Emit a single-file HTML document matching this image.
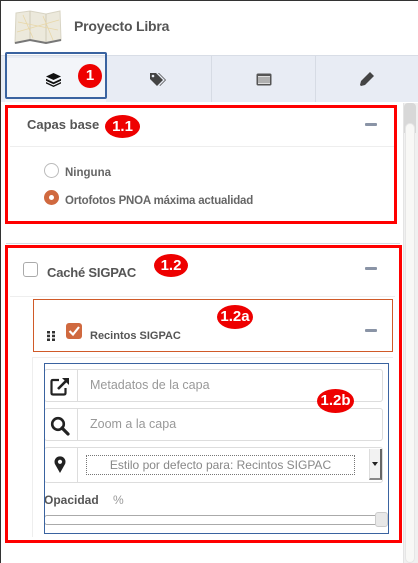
<!DOCTYPE html>
<html><head><meta charset="utf-8"><style>
*{box-sizing:border-box;margin:0;padding:0}
body{width:418px;height:563px;overflow:hidden;background:#fff;font-family:"Liberation Sans",sans-serif;position:relative;color:#555}
.a{position:absolute}
.badge{position:absolute;background:#e00;color:#fff;font-weight:bold;font-size:15px;border-radius:50%;text-align:center;line-height:24px;height:24px}
.minus{position:absolute;width:12px;height:3px;background:#8a94a6;border-radius:1px}
.row{position:absolute;left:44px;width:339px;border:1px solid #ddd;border-radius:3px;background:#fff}
.row .ic{position:absolute;left:0;top:0;bottom:0;width:33px;border-right:1px solid #ddd}
.row .t{position:absolute;left:45px;font-size:12.5px;color:#999}
</style></head><body>
<div class="a" style="left:0;top:0;width:1px;height:563px;background:#333"></div>
<div class="a" style="left:0;top:0;width:418px;height:1px;background:#333"></div>
<svg class="a" style="left:13px;top:10px" width="50" height="34" viewBox="0 0 50 34">
<path d="M3 3 L17 1 L33 4 L47 1 L48 30 L33 33 L17 30 L2 33 Z" fill="#ece9dc" stroke="#d8d4c4"/>
<path d="M17 1 L17 30 M33 4 L33 33" stroke="#cfcab8"/>
<path d="M5 12 L45 20 M10 5 L20 28 M30 6 L40 30 M4 22 L46 10" stroke="#e8d7a8" stroke-width="0.8"/>
<path d="M2 33 L17 30 L33 33 L48 30" stroke="#777" stroke-width="2" fill="none"/>
</svg>
<div class="a" style="left:74px;top:18px;font-size:14px;font-weight:bold;color:#555;letter-spacing:-0.2px">Proyecto Libra</div>
<div class="a" style="left:1px;top:55px;width:417px;height:47px;background:#e8ecf4;border-top:1px solid #d8dde6"></div>
<div class="a" style="left:5px;top:58px;width:101px;height:44px;background:#f3f5f9"></div>
<div class="a" style="left:211px;top:56px;width:1px;height:46px;background:#d6dbe4"></div>
<div class="a" style="left:315px;top:56px;width:1px;height:46px;background:#d6dbe4"></div>
<div class="a" style="left:5px;top:52px;width:102px;height:47px;border:2px solid #3a63a0;border-radius:2px"></div>
<svg class="a" style="left:46px;top:73px" width="15" height="14" viewBox="0 0 15 14"><path d="M7.5 0 L15 3.5 L7.5 7 L0 3.5Z M0 5.8 L7.5 9.3 L15 5.8 L15 7.8 L7.5 11.3 L0 7.8Z M0 9 L7.5 12.5 L15 9 L15 10.5 L7.5 14 L0 10.5Z" fill="#111"/></svg>
<div class="badge" style="left:78px;top:64px;width:24px">1</div>
<svg class="a" style="left:150px;top:73px" width="18" height="14" viewBox="0 0 18 14"><path d="M0 0 H6 L13 7 L7 13 L0 6Z" fill="#444"/><circle cx="3" cy="3" r="1.3" fill="#e8ecf4"/><path d="M8 0 H9 L16 7 L10 13 L9.5 12.5 L15 7Z" fill="#444"/></svg>
<svg class="a" style="left:256px;top:73px" width="16" height="13" viewBox="0 0 16 13"><rect x="0.5" y="0.5" width="15" height="12" rx="1.5" fill="#555"/><rect x="2" y="3" width="12" height="8" fill="#ddd"/><path d="M2 5H14M2 7H14M2 9H14" stroke="#666" stroke-width="0.8"/></svg>
<svg class="a" style="left:360px;top:72px" width="14" height="14" viewBox="0 0 14 14"><path d="M10 0 L14 4 L5 13 L1 14 L0 13 L1 9Z" fill="#444"/></svg>
<div class="a" style="left:403px;top:103px;width:15px;height:460px;background:#f0f0f0;border-left:1px solid #e4e4e4"></div>
<div class="a" style="left:404px;top:103px;width:12px;height:30px;background:#d8d8d8;border-radius:4px 4px 0 0"></div>
<div class="a" style="left:405px;top:123px;width:10px;height:440px;background:#f8f8f6;border-radius:5px;border:1px solid #e6e6e6"></div>
<div class="a" style="left:10px;top:146px;width:385px;height:1px;background:#eee"></div>
<div class="a" style="left:5px;top:105px;width:392px;height:119px;border:3px solid #f00"></div>
<div class="a" style="left:27px;top:117px;font-size:13px;font-weight:bold;color:#555">Capas base</div>
<div class="badge" style="left:105px;top:115px;width:35px;height:23px;line-height:23px">1.1</div>
<div class="minus" style="left:365px;top:123px"></div>
<div class="a" style="left:44px;top:163px;width:15px;height:15px;border:1px solid #bbb;border-radius:50%;background:#fff"></div>
<div class="a" style="left:65px;top:167px;font-size:11.5px;font-weight:bold;color:#666">Ninguna</div>
<div class="a" style="left:44px;top:190px;width:15px;height:15px;border-radius:50%;background:#d0693f"></div>
<div class="a" style="left:49px;top:195px;width:5px;height:5px;border-radius:50%;background:#fff"></div>
<div class="a" style="left:65px;top:195px;font-size:11.5px;font-weight:bold;color:#666;letter-spacing:-0.2px">Ortofotos PNOA máxima actualidad</div>
<div class="a" style="left:6px;top:243px;width:394px;height:1px;background:#d5d9e2"></div>
<div class="a" style="left:10px;top:296px;width:385px;height:1px;background:#eee"></div>
<div class="a" style="left:33px;top:357px;width:360px;height:1px;background:#eee"></div>
<div class="a" style="left:32px;top:357px;width:1px;height:180px;background:#eee"></div>
<div class="a" style="left:5px;top:245px;width:397px;height:298px;border:3px solid #f00"></div>
<div class="a" style="left:23px;top:262px;width:15px;height:15px;border:1px solid #aaa;border-radius:3px;background:#fff"></div>
<div class="a" style="left:47px;top:265px;font-size:13px;font-weight:bold;color:#555;letter-spacing:-0.2px">Caché SIGPAC</div>
<div class="badge" style="left:154px;top:254px;width:34px;height:23px;line-height:23px">1.2</div>
<div class="minus" style="left:365px;top:267px"></div>
<div class="a" style="left:33px;top:299px;width:360px;height:53px;border:1px solid #d05a28"></div>
<svg class="a" style="left:47px;top:331px" width="10" height="10" viewBox="0 0 10 10"><g fill="#333"><rect x="0" y="0" width="3" height="2.5"/><rect x="5" y="0" width="3" height="2.5"/><rect x="0" y="3.7" width="3" height="2.5"/><rect x="5" y="3.7" width="3" height="2.5"/><rect x="0" y="7.5" width="3" height="2.5"/><rect x="5" y="7.5" width="3" height="2.5"/></g></svg>
<div class="a" style="left:66px;top:323px;width:16px;height:16px;background:#d0693f;border-radius:3px"></div>
<svg class="a" style="left:66px;top:323px" width="16" height="16" viewBox="0 0 16 16"><path d="M3.5 8 L7 11.5 L13 4" stroke="#fff" stroke-width="2.2" fill="none"/></svg>
<div class="a" style="left:90px;top:330px;font-size:11px;font-weight:bold;color:#555">Recintos SIGPAC</div>
<div class="badge" style="left:217px;top:305px;width:36px;height:24px">1.2a</div>
<div class="minus" style="left:365px;top:329px"></div>
<div class="row" style="top:369px;height:33px"><div class="ic"></div><div class="t" style="top:8px">Metadatos de la capa</div></div>
<svg class="a" style="left:50px;top:377px" width="20" height="19" viewBox="0 0 20 19"><path d="M9 3 H3 Q1.5 3 1.5 4.5 V16 Q1.5 17.5 3 17.5 H14 Q15.5 17.5 15.5 16 V11" stroke="#222" stroke-width="2.2" fill="none"/><path d="M12 1 H19 V8 Z" fill="#222"/><path d="M17 3 L8 12" stroke="#222" stroke-width="2.6"/></svg>
<div class="row" style="top:408px;height:33px"><div class="ic"></div><div class="t" style="top:8px">Zoom a la capa</div></div>
<svg class="a" style="left:50px;top:416px" width="20" height="20" viewBox="0 0 20 20"><circle cx="8" cy="8" r="5.8" stroke="#222" stroke-width="2.6" fill="none"/><path d="M12 12 L18 18" stroke="#222" stroke-width="3.2" stroke-linecap="round"/></svg>
<div class="row" style="top:447px;height:36px"><div class="ic"></div></div>
<svg class="a" style="left:54px;top:456px" width="12" height="17" viewBox="0 0 12 17"><path d="M6 17 L1.2 8.5 A5.5 5.5 0 1 1 10.8 8.5 Z" fill="#222"/><circle cx="6" cy="5.8" r="2.1" fill="#fff"/></svg>
<div class="a" style="left:86px;top:455px;width:269px;height:20px;border:1px dotted #777;font-size:12px;color:#888;text-align:center;line-height:18px">Estilo por defecto para: Recintos SIGPAC</div>
<div class="a" style="left:369px;top:449px;width:13px;height:31px;background:#f2f2f2;border-right:2px solid #666;border-bottom:2px solid #888;border-left:1px solid #ddd"></div>
<div class="a" style="left:372px;top:462px;width:0;height:0;border-left:3px solid transparent;border-right:3px solid transparent;border-top:4px solid #222"></div>
<div class="a" style="left:44px;top:493px;font-size:12px;font-weight:bold;color:#555">Opacidad</div>
<div class="a" style="left:113px;top:493px;font-size:12px;color:#999">%</div>
<div class="a" style="left:44px;top:515px;width:335px;height:10px;border:1px solid #aaa;border-radius:3px;background:#fff"></div>
<div class="a" style="left:375px;top:512px;width:13px;height:15px;border:1px solid #ccc;border-radius:3px;background:#e8e8e8"></div>
<div class="a" style="left:44px;top:363px;width:345px;height:171px;border:1px solid #3a63a0"></div>
<div class="badge" style="left:317px;top:389px;width:37px;height:24px">1.2b</div>
</body></html>
